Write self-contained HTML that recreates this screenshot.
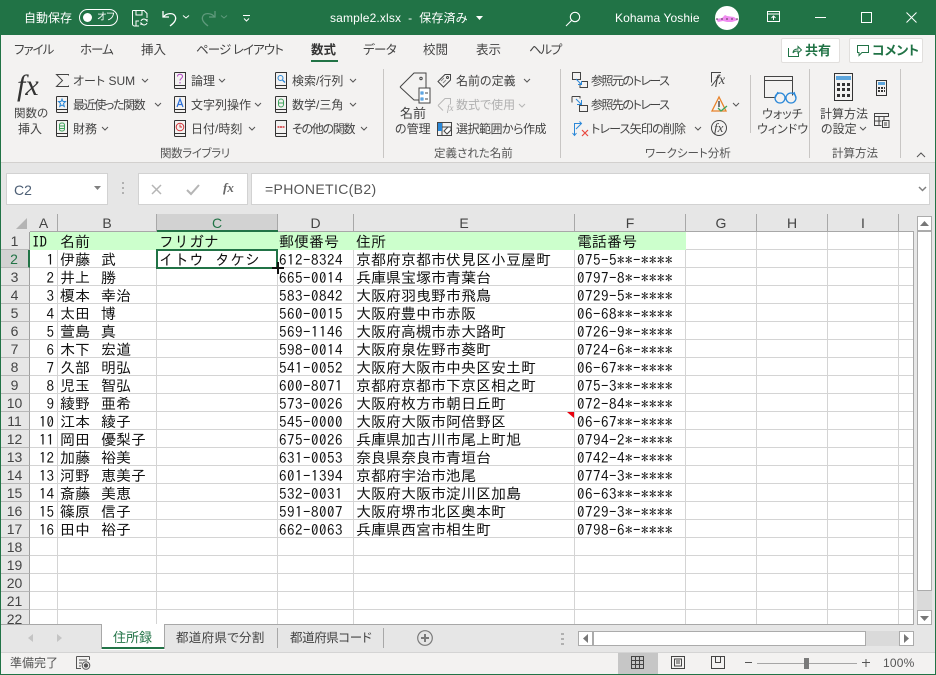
<!DOCTYPE html>
<html lang="ja"><head><meta charset="utf-8"><title>sample2.xlsx</title>
<style>
html,body{margin:0;padding:0}
body{width:936px;height:675px;overflow:hidden;position:relative;background:#e6e6e6;font-family:"Liberation Sans","Noto Sans CJK JP",sans-serif;color:#444}
.a{position:absolute;white-space:nowrap}
.t{position:absolute;white-space:nowrap;font-size:12px;line-height:16px;color:#444;font-feature-settings:"palt"}
.w{color:#fff}
svg{position:absolute;overflow:visible}
.tab{top:42px;font-size:12.5px;line-height:16px;color:#444}
.g{top:146px;font-size:11.5px;color:#555}
.sep{position:absolute;width:1px;background:#c8c6c4}
#grid{position:absolute;left:0;top:214px;width:914px;height:411px;overflow:hidden;background:#fff}
table{border-collapse:separate;border-spacing:0;table-layout:fixed;width:914px;position:absolute;left:0;top:18px}
td{height:18px;box-sizing:border-box;padding:2px 0 0 2px;border-right:1px solid #d4d4d4;border-bottom:1px solid #d4d4d4;font:15px/15px "IPAGothic","Noto Sans CJK JP",monospace;color:#111;overflow:hidden;white-space:nowrap}
td:nth-child(5),td:nth-child(7){letter-spacing:.5px}
td:nth-child(5){padding-left:1px}
tr.f td{letter-spacing:0}
td.h{background:#e6e6e6;border-right:1px solid #9f9f9f;border-bottom:1px solid #b8b8b8;text-align:center;font:14px/15px "Liberation Sans",sans-serif;color:#444;padding:2px 0 0 0}
td.n{text-align:right;padding:2px 3px 0 0}
tr.f td{background:#ccffcc;border-color:#ccffcc}
tr.f td.h{background:#e6e6e6;border-right-color:#9f9f9f;border-bottom-color:#b8b8b8}
tr.f td.e{background:#fff;border-color:#d4d4d4}
s{text-decoration:none;font-size:11px;line-height:0}
.ch{position:absolute;top:214px;height:18px;font-size:14px;line-height:18px;text-align:center;color:#444;border-right:1px solid #a8a8a8;box-sizing:border-box;background:#e6e6e6}
</style></head><body>

<!-- title bar -->
<div class="a" style="left:0;top:0;width:936px;height:35px;background:#217346"></div>
<div class="t w" style="left:24px;top:10px;font-size:12px">自動保存</div>
<div class="a" style="left:79px;top:9px;width:37px;height:15px;border:1px solid #fff;border-radius:9px"></div>
<div class="a" style="left:83px;top:13px;width:9px;height:9px;background:#fff;border-radius:50%"></div>
<div class="t w" style="left:97px;top:10px;font-size:10px">オフ</div>
<svg style="left:132px;top:10px" width="16" height="17" fill="none" stroke="#fff"><path d="M.5.5H12l3 3V8M.5.5V14a2 2 0 002 2H7M4 .5V5h6V.5M4 16v-5h3"/><path d="M9 11a3 3 0 015-1l1 1v-2M15 13a3 3 0 01-5 1l-1-1v2" stroke-width="1"/></svg>
<svg style="left:162px;top:10px" width="15" height="17" fill="none" stroke="#fff" stroke-width="1.3"><path d="M1 1v6h6M1.5 7C4 3 12 2 13.5 7c1 4-3 7-5.5 9"/></svg>
<svg style="left:183px;top:15px" width="6" height="4" fill="none" stroke="#fff"><path d="M0 .5l3 2.500 3-2.500"/></svg>
<svg style="left:201px;top:10px" width="15" height="17" fill="none" stroke="#5f9a7c" stroke-width="1.300"><path d="M14 1v6H8M13.500 7C11 3 3 2 1.500 7c-1 4 3 7 5.500 9"/></svg>
<svg style="left:221px;top:15px" width="6" height="4" fill="none" stroke="#5f9a7c"><path d="M0 .5l3 2.500 3-2.500"/></svg>
<svg style="left:243px;top:15px" width="8" height="7" fill="none" stroke="#fff"><path d="M0 .5h7M1 3.500l2.500 2.500L6 3.500"/></svg>
<div class="t w" style="left:330px;top:10px;font-size:12px;letter-spacing:.15px">sample2.xlsx&nbsp; - &nbsp;保存済み</div>
<svg style="left:476px;top:16px" width="7" height="4" fill="#fff"><path d="M0 0h7L3.500 4z"/></svg>
<svg style="left:565px;top:11px" width="16" height="16" fill="none" stroke="#fff" stroke-width="1.100"><circle cx="10" cy="6" r="4.700"/><path d="M6.500 9.500L1 15"/></svg>
<div class="t w" style="left:615px;top:10px;font-size:12px;letter-spacing:.1px">Kohama Yoshie</div>
<div class="a" style="left:715px;top:6px;width:24px;height:24px;border-radius:50%;background:#fff"></div>
<svg style="left:715px;top:12px" width="24" height="12"><path d="M1 7l6-1 3-3 2 1 7 1 4 3-6 2-5 0-4-1-5 1z" fill="#f08cf0"/><path d="M1 7h22" stroke="#222" stroke-width=".7" stroke-dasharray="2 3"/></svg>
<svg style="left:767px;top:11px" width="14" height="12" fill="none" stroke="#fff"><path d="M.5.500h12v10H.5zM.5 3h12M6.500 9V5M4.500 7l2-2 2 2"/></svg>
<div class="a" style="left:815px;top:17px;width:11px;height:1px;background:#fff"></div>
<div class="a" style="left:861px;top:12px;width:9px;height:9px;border:1px solid #fff"></div>
<svg style="left:906px;top:12px" width="11" height="11" stroke="#fff" fill="none"><path d="M.5.500l10 10M10.500.500l-10 10"/></svg>

<!-- ribbon -->
<div class="a" style="left:1px;top:35px;width:934px;height:127px;background:#f3f2f1"></div>
<div class="a" style="left:0;top:162px;width:936px;height:1px;background:#d2d0ce"></div>
<div class="t tab" style="left:14px;letter-spacing:-1px">ファイル</div>
<div class="t tab" style="left:80px;letter-spacing:-1px">ホーム</div>
<div class="t tab" style="left:141px">挿入</div>
<div class="t tab" style="left:196px;letter-spacing:-.9px">ページ レイアウト</div>
<div class="t tab" style="left:311px;font-weight:700;color:#333">数式</div>
<div class="a" style="left:311px;top:60px;width:27px;height:2px;background:#217346"></div>
<div class="t tab" style="left:363px;letter-spacing:-.6px">データ</div>
<div class="t tab" style="left:423px">校閲</div>
<div class="t tab" style="left:476px">表示</div>
<div class="t tab" style="left:529px;letter-spacing:-1.300px">ヘルプ</div>
<div class="a" style="left:781px;top:38px;width:57px;height:23px;background:#fff;border:1px solid #e1dfdd;border-radius:2px"></div>
<svg style="left:788px;top:45px" width="14" height="12" fill="none" stroke="#217346"><path d="M.5 3v8.500h10V8M5 8c0-3 2-4 5-4V1.500L13.500 5 10 8V6c-2 0-4 0-5 2z"/></svg>
<div class="t" style="left:805px;top:43px;font-size:13px;font-weight:700;color:#217346">共有</div>
<div class="a" style="left:849px;top:38px;width:72px;height:23px;background:#fff;border:1px solid #e1dfdd;border-radius:2px"></div>
<svg style="left:857px;top:45px" width="13" height="12" fill="none" stroke="#217346"><path d="M.5.500h11v7H5l-3 3v-3H.5z"/></svg>
<div class="t" style="left:872px;top:43px;font-size:13px;font-weight:700;color:#217346">コメント</div>

<!-- insert function -->
<div class="a" style="left:17px;top:68px;font:italic 30px/36px 'Liberation Serif',serif;color:#333">fx</div>
<div class="t" style="left:14px;top:106px;font-size:11.500px">関数の</div>
<div class="t" style="left:18px;top:121px">挿入</div>

<svg style="left:56px;top:74px" width="13" height="13" fill="none" stroke="#444"><path d="M12.500 1.500V.5H.5l6 6-6 6h12v-1"/></svg>
<div class="t" style="left:73px;top:73px">オート SUM</div>
<div class="t" style="left:73px;top:97px;letter-spacing:-1.400px">最近使った関数</div>
<div class="t" style="left:73px;top:121px">財務</div>
<div class="t" style="left:191px;top:73px">論理</div>
<div class="t" style="left:191px;top:97px">文字列操作</div>
<div class="t" style="left:191px;top:121px">日付/時刻</div>
<div class="t" style="left:292px;top:73px">検索/行列</div>
<div class="t" style="left:292px;top:97px">数学/三角</div>
<div class="t" style="left:292px;top:121px;letter-spacing:-1.300px">その他の関数</div>

<!-- book icons -->
<svg style="left:56px;top:96px" width="12" height="17" fill="none" stroke="#333"><path d="M.5 1C.5.700 1 .500 1.500.500h10v16h-10a1 1 0 01-1-1zM.5 13.500h11"/><path d="M6 3l1 2.500h2.500L7.500 7.500l.8 3L6 9l-2.300 1.500.8-3-2-2H5z" stroke="#2b88d8"/></svg>
<svg style="left:56px;top:120px" width="12" height="17" fill="none" stroke="#333"><path d="M.5 1C.5.700 1 .500 1.500.500h10v16h-10a1 1 0 01-1-1zM.5 13.500h11"/><rect x="3.500" y="3" width="5" height="8" rx="2" stroke="#3fa35c"/><path d="M3.500 6h5M3.500 8.500h5" stroke="#3fa35c"/></svg>
<svg style="left:174px;top:72px" width="12" height="17" fill="none" stroke="#333"><path d="M.5 1C.5.700 1 .500 1.500.500h10v16h-10a1 1 0 01-1-1zM.5 13.500h11"/><path d="M3.500 4.500c0-3 5-3 5 0 0 2-2.500 2-2.500 4M6 10v1.500" stroke="#b146c2"/></svg>
<svg style="left:174px;top:96px" width="12" height="17" fill="none" stroke="#333"><path d="M.5 1C.5.700 1 .500 1.500.500h10v16h-10a1 1 0 01-1-1zM.5 13.500h11"/><path d="M3 11l3-8 3 8M4 8.500h4" stroke="#2b6fd8" stroke-width="1.200"/></svg>
<svg style="left:174px;top:120px" width="12" height="17" fill="none" stroke="#333"><path d="M.5 1C.5.700 1 .500 1.500.500h10v16h-10a1 1 0 01-1-1zM.5 13.500h11"/><circle cx="6" cy="7" r="3.800" stroke="#d13438"/><path d="M6 4.500V7h2" stroke="#d13438"/></svg>
<svg style="left:275px;top:72px" width="12" height="17" fill="none" stroke="#333"><path d="M.5 1C.5.700 1 .500 1.500.500h10v16h-10a1 1 0 01-1-1zM.5 13.500h11"/><circle cx="5.500" cy="6" r="2.500" stroke="#2b88d8"/><path d="M7.500 8L10 10.500" stroke="#2b88d8" stroke-width="1.300"/></svg>
<svg style="left:275px;top:96px" width="12" height="17" fill="none" stroke="#333"><path d="M.5 1C.5.700 1 .500 1.500.500h10v16h-10a1 1 0 01-1-1zM.5 13.500h11"/><rect x="3.500" y="3" width="5" height="8" rx="2.500" stroke="#3fa35c"/><path d="M3.500 7h5" stroke="#3fa35c"/></svg>
<svg style="left:275px;top:120px" width="12" height="17" fill="none" stroke="#333"><path d="M.5 1C.5.700 1 .500 1.500.500h10v16h-10a1 1 0 01-1-1zM.5 13.500h11"/><path d="M2.500 7h2M5 7h2M7.500 7h2" stroke="#d13438" stroke-width="1.500"/></svg>

<!-- chevrons -->
<svg style="left:0;top:0" width="936" height="170" fill="none" stroke="#555" stroke-width="1">
<path d="M142 79l3 3 3-3M155 103l3 3 3-3M102 127l3 3 3-3M219 79l3 3 3-3M255 103l3 3 3-3M249 127l3 3 3-3M350 79l3 3 3-3M350 103l3 3 3-3M361 127l3 3 3-3M524 79l3 3 3-3M695 127l3 3 3-3M733 103l3 3 3-3M860 127l3 3 3-3M917 157l4-4 4 4"/>
<path d="M519 104l3 3 3-3" stroke="#b5b5b5"/>
</svg>

<div class="t g" style="left:160px;letter-spacing:-.4px">関数ライブラリ</div>
<div class="sep" style="left:383px;top:69px;height:89px"></div>

<!-- defined names -->
<svg style="left:399px;top:72px" width="32" height="32" fill="none" stroke="#444"><path d="M1 15L15 1h12v19M1 15l14 13h5"/><circle cx="22" cy="6.500" r="1.200"/><rect x="20" y="16" width="11" height="15" fill="#fff"/><path d="M22 20h2v2h-2zM22 26h2v2h-2z" stroke="#2b88d8"/><path d="M26 21h3M26 27h3" stroke="#444"/></svg>
<div class="t" style="left:400px;top:106px;font-size:13px">名前</div>
<div class="t" style="left:395px;top:121px">の管理</div>
<svg style="left:437px;top:73px" width="15" height="15" fill="none" stroke="#444"><path d="M1 8.500L8 1.500h5.500V7l-7 7z"/><circle cx="10.500" cy="4.500" r="1"/><path d="M4 8l3-3M6 10l3-3" stroke="#888"/></svg>
<svg style="left:437px;top:97px" width="15" height="15" fill="none" stroke="#b8b8b8"><path d="M1 8.500L8 1.500h5.500V7M1 8.500l5 5"/></svg>
<div class="a" style="left:447px;top:104px;font:italic 9px/9px 'Liberation Serif',serif;color:#aaa">fx</div>
<svg style="left:437px;top:122px" width="15" height="14" fill="none" stroke="#444"><path d="M.5.500h14v13H.5zM.5 5h14M5 .500v13"/><path d="M1 1h4v4H1zM1 5h4v4H1z" fill="#2b88d8" stroke="none"/><path d="M7 9l4-4h3v3l-4 4z" fill="#fff"/></svg>
<div class="t" style="left:456px;top:73px">名前の定義</div>
<div class="t" style="left:456px;top:97px;color:#b1b1b1">数式で使用</div>
<div class="t" style="left:456px;top:121px;letter-spacing:-.5px">選択範囲から作成</div>
<div class="t g" style="left:434px">定義された名前</div>
<div class="sep" style="left:560px;top:69px;height:89px"></div>

<!-- audit -->
<svg style="left:572px;top:72px" width="16" height="16" fill="none" stroke="#444"><path d="M.5.500h8v7h-8zM10 9.500h5.500v6H8v-4"/><path d="M4 7l5 5" stroke="#2b88d8"/><path d="M9.500 9v3.500H6" stroke="#2b88d8"/></svg>
<svg style="left:572px;top:96px" width="16" height="16" fill="none" stroke="#444"><path d="M0 .5h8v2M0 .500v6M7.500 9.500h8v6h-8z"/><path d="M4 3l5 5" stroke="#2b88d8"/><path d="M9.500 4v4.500H5" stroke="#2b88d8"/></svg>
<svg style="left:572px;top:120px" width="18" height="17" fill="none" stroke="#2b88d8"><path d="M2.500 15V3.500h7M.5 13l2 2.500 2-2.500M7.500 1.500l2 2-2 2M4 9l5-5"/><path d="M10 10l6 6M16 10l-6 6" stroke="#e8473f" stroke-width="1.200"/></svg>
<div class="t" style="left:591px;top:73px;letter-spacing:-1.500px">参照元のトレース</div>
<div class="t" style="left:591px;top:97px;letter-spacing:-1.500px">参照先のトレース</div>
<div class="t" style="left:591px;top:121px;letter-spacing:-.8px">トレース矢印の削除</div>
<svg style="left:711px;top:72px" width="10" height="14" fill="none" stroke="#444"><path d="M0 .5h10M.5 .5v10M.5 14L9 3"/></svg>
<div class="a" style="left:715px;top:72px;font:italic 14px/18px 'Liberation Serif',serif;color:#444">fx</div>
<svg style="left:711px;top:96px" width="17" height="16" fill="none"><path d="M8 1L1 15h14z" stroke="#e8832a" stroke-width="1.300"/><path d="M8 5v6" stroke="#333" stroke-width="1.300"/><path d="M7 12l3 3 6-5" stroke="#3fa35c" stroke-width="1.300"/></svg>
<svg style="left:711px;top:120px" width="16" height="16" fill="none" stroke="#444"><circle cx="8" cy="8" r="7.500"/></svg>
<div class="a" style="left:714px;top:119px;font:italic 13px/18px 'Liberation Serif',serif;color:#444">fx</div>
<div class="sep" style="left:750px;top:75px;height:58px"></div>
<svg style="left:764px;top:76px" width="33" height="29" fill="none" stroke="#444"><path d="M.5 22V.5h28v19M.5 4.500h28M.5 21.500h10" /><g stroke="#2b88d8" stroke-width="1.300"><circle cx="16" cy="22" r="5"/><circle cx="27" cy="22" r="5"/><path d="M21 21h1M11 22l3-6M32 22l-2-6"/></g></svg>
<div class="t" style="left:762px;top:106px">ウォッチ</div>
<div class="t" style="left:757px;top:121px">ウィンドウ</div>
<div class="sep" style="left:809px;top:69px;height:89px"></div>

<!-- calc -->
<svg style="left:834px;top:73px" width="23" height="29" fill="none"><rect x=".5" y=".5" width="18" height="27" stroke="#333"/><rect x="2" y="3" width="15" height="4" fill="#5ca5dc"/><path d="M3 10h3v3H3zM8 10h3v3H8zM13 10h3v3h-3zM3 15h3v3H3zM8 15h3v3H8zM13 15h3v3h-3zM3 21h3v3H3zM8 21h3v3H8zM13 21h3v3h-3z" fill="#333"/></svg>
<svg style="left:876px;top:80px" width="12" height="16" fill="none"><rect x=".5" y=".5" width="10" height="15" stroke="#333"/><rect x="2" y="2" width="7" height="3" fill="#5ca5dc"/><path d="M2 7h2v2H2zM5 7h2v2H5zM8 7h1v2H8zM2 10h2v2H2zM5 10h2v2H5zM8 10h1v2H8z" fill="#333"/></svg>
<svg style="left:874px;top:113px" width="16" height="15" fill="none" stroke="#444"><path d="M.5.500h14v3H.5zM.5 3.500v9h7M.5 8h7M5 3.500v9M10 3.500V7"/><rect x="8.500" y="7.500" width="6.500" height="7" fill="#f3f2f1"/><path d="M10 10h3M10 12h3"/></svg>
<div class="t" style="left:820px;top:106px">計算方法</div>
<div class="t" style="left:821px;top:121px">の設定</div>
<div class="sep" style="left:900px;top:69px;height:89px"></div>
<div class="t g" style="left:645px">ワークシート分析</div>
<div class="t g" style="left:832px">計算方法</div>

<!-- formula bar -->
<div class="a" style="left:0;top:163px;width:936px;height:51px;background:#e6e6e6"></div>
<div class="a" style="left:6px;top:173px;width:100px;height:30px;background:#fff;border:1px solid #d2d2d2"></div>
<div class="a" style="left:14px;top:181px;font-size:14px;line-height:18px;color:#4d5f75">C2</div>
<svg style="left:94px;top:186px" width="8" height="4"><path d="M0 0h7L3.500 4z" fill="#808080"/></svg>
<svg style="left:122px;top:182px" width="3" height="13"><path d="M0 0h2v2H0zM0 5h2v2H0zM0 10h2v2H0z" fill="#b0b0b0"/></svg>
<div class="a" style="left:138px;top:173px;width:108px;height:30px;background:#fff;border:1px solid #d2d2d2"></div>
<svg style="left:151px;top:184px" width="11" height="11" stroke="#b5b5b5" stroke-width="1.500"><path d="M1 1l9 9M10 1l-9 9"/></svg>
<svg style="left:186px;top:183px" width="15" height="12" stroke="#b5b5b5" stroke-width="2" fill="none"><path d="M1 7l4 4 8-9"/></svg>
<div class="a" style="left:223px;top:179px;font:italic bold 13px/18px 'Liberation Serif',serif;color:#666">fx</div>
<div class="a" style="left:251px;top:173px;width:677px;height:30px;background:#fff;border:1px solid #d2d2d2"></div>
<div class="a" style="left:265px;top:180px;font-size:14px;line-height:18px;color:#555;letter-spacing:.35px">=PHONETIC(B2)</div>
<svg style="left:918px;top:186px" width="9" height="6" fill="none" stroke="#808080" stroke-width="1.500"><path d="M1 1l3.500 3.500L8 1"/></svg>

<!-- grid -->
<div id="grid">
<table><colgroup><col style="width:30px"><col style="width:28px"><col style="width:99px"><col style="width:121px"><col style="width:76px"><col style="width:221px"><col style="width:111px"><col style="width:71px"><col style="width:71px"><col style="width:71px"><col style="width:15px"></colgroup>
<tr class="f"><td class="h">1</td><td>ID</td><td>名前</td><td>フリガナ</td><td>郵便番号</td><td>住所</td><td>電話番号</td><td class="e"></td><td class="e"></td><td class="e"></td><td class="e"></td></tr>
<tr><td class="h" style="background:#d2d2d2;color:#217346;border-right:2px solid #217346">2</td><td class="n">1</td><td>伊藤<s>　</s>武</td><td>イトウ<s>　</s>タケシ</td><td>612-8324</td><td>京都府京都市伏見区小豆屋町</td><td>075-5**-****</td><td></td><td></td><td></td><td></td></tr>
<tr><td class="h">3</td><td class="n">2</td><td>井上<s>　</s>勝</td><td></td><td>665-0014</td><td>兵庫県宝塚市青葉台</td><td>0797-8*-****</td><td></td><td></td><td></td><td></td></tr>
<tr><td class="h">4</td><td class="n">3</td><td>榎本<s>　</s>幸治</td><td></td><td>583-0842</td><td>大阪府羽曳野市飛鳥</td><td>0729-5*-****</td><td></td><td></td><td></td><td></td></tr>
<tr><td class="h">5</td><td class="n">4</td><td>太田<s>　</s>博</td><td></td><td>560-0015</td><td>大阪府豊中市赤阪</td><td>06-68**-****</td><td></td><td></td><td></td><td></td></tr>
<tr><td class="h">6</td><td class="n">5</td><td>萱島<s>　</s>真</td><td></td><td>569-1146</td><td>大阪府高槻市赤大路町</td><td>0726-9*-****</td><td></td><td></td><td></td><td></td></tr>
<tr><td class="h">7</td><td class="n">6</td><td>木下<s>　</s>宏道</td><td></td><td>598-0014</td><td>大阪府泉佐野市葵町</td><td>0724-6*-****</td><td></td><td></td><td></td><td></td></tr>
<tr><td class="h">8</td><td class="n">7</td><td>久部<s>　</s>明弘</td><td></td><td>541-0052</td><td>大阪府大阪市中央区安土町</td><td>06-67**-****</td><td></td><td></td><td></td><td></td></tr>
<tr><td class="h">9</td><td class="n">8</td><td>児玉<s>　</s>智弘</td><td></td><td>600-8071</td><td>京都府京都市下京区相之町</td><td>075-3**-****</td><td></td><td></td><td></td><td></td></tr>
<tr><td class="h">10</td><td class="n">9</td><td>綾野<s>　</s>亜希</td><td></td><td>573-0026</td><td>大阪府枚方市朝日丘町</td><td>072-84*-****</td><td></td><td></td><td></td><td></td></tr>
<tr><td class="h">11</td><td class="n">10</td><td>江本<s>　</s>綾子</td><td></td><td>545-0000</td><td>大阪府大阪市阿倍野区</td><td>06-67**-****</td><td></td><td></td><td></td><td></td></tr>
<tr><td class="h">12</td><td class="n">11</td><td>岡田<s>　</s>優梨子</td><td></td><td>675-0026</td><td>兵庫県加古川市尾上町旭</td><td>0794-2*-****</td><td></td><td></td><td></td><td></td></tr>
<tr><td class="h">13</td><td class="n">12</td><td>加藤<s>　</s>裕美</td><td></td><td>631-0053</td><td>奈良県奈良市青垣台</td><td>0742-4*-****</td><td></td><td></td><td></td><td></td></tr>
<tr><td class="h">14</td><td class="n">13</td><td>河野<s>　</s>恵美子</td><td></td><td>601-1394</td><td>京都府宇治市池尾</td><td>0774-3*-****</td><td></td><td></td><td></td><td></td></tr>
<tr><td class="h">15</td><td class="n">14</td><td>斎藤<s>　</s>美恵</td><td></td><td>532-0031</td><td>大阪府大阪市淀川区加島</td><td>06-63**-****</td><td></td><td></td><td></td><td></td></tr>
<tr><td class="h">16</td><td class="n">15</td><td>篠原<s>　</s>信子</td><td></td><td>591-8007</td><td>大阪府堺市北区奥本町</td><td>0729-3*-****</td><td></td><td></td><td></td><td></td></tr>
<tr><td class="h">17</td><td class="n">16</td><td>田中<s>　</s>裕子</td><td></td><td>662-0063</td><td>兵庫県西宮市相生町</td><td>0798-6*-****</td><td></td><td></td><td></td><td></td></tr>
<tr><td class="h">18</td><td></td><td></td><td></td><td></td><td></td><td></td><td></td><td></td><td></td><td></td></tr>
<tr><td class="h">19</td><td></td><td></td><td></td><td></td><td></td><td></td><td></td><td></td><td></td><td></td></tr>
<tr><td class="h">20</td><td></td><td></td><td></td><td></td><td></td><td></td><td></td><td></td><td></td><td></td></tr>
<tr><td class="h">21</td><td></td><td></td><td></td><td></td><td></td><td></td><td></td><td></td><td></td><td></td></tr>
<tr><td class="h">22</td><td></td><td></td><td></td><td></td><td></td><td></td><td></td><td></td><td></td><td></td></tr>
</table>
</div>
<!-- column headers -->
<div class="a" style="left:0;top:214px;width:914px;height:18px;background:#e6e6e6"></div>
<svg style="left:16px;top:218px" width="12" height="12"><path d="M11 0v11H0z" fill="#b4b4b4"/></svg>
<div class="ch" style="left:30px;width:28px">A</div>
<div class="ch" style="left:58px;width:99px">B</div>
<div class="ch" style="left:157px;width:121px;background:#d2d2d2;color:#217346;border-bottom:2px solid #217346">C</div>
<div class="ch" style="left:278px;width:76px">D</div>
<div class="ch" style="left:354px;width:221px">E</div>
<div class="ch" style="left:575px;width:111px">F</div>
<div class="ch" style="left:686px;width:71px">G</div>
<div class="ch" style="left:757px;width:71px">H</div>
<div class="ch" style="left:828px;width:71px">I</div>
<div class="a" style="left:30px;top:231px;width:883px;height:1px;background:#a8a8a8"></div>
<div class="a" style="left:157px;top:230px;width:121px;height:2px;background:#217346"></div>
<div class="a" style="left:913px;top:231px;width:1px;height:394px;background:#a8a8a8"></div>
<div class="a" style="left:0;top:624px;width:914px;height:1px;background:#a8a8a8"></div>
<!-- selection + cursor -->
<div class="a" style="left:156px;top:249px;width:118px;height:16px;border:2px solid #217346"></div>
<svg style="left:272px;top:262px" width="12" height="12"><path d="M5 0h2v5h5v2H7v5H5V7H0V5h5z" fill="#111"/></svg>
<!-- comment marker -->
<svg style="left:567px;top:412px" width="7" height="6"><path d="M0 0h7v6z" fill="#e8000d"/></svg>

<!-- v scrollbar -->
<div class="a" style="left:917px;top:216px;width:15px;height:408px;background:#dadada"></div>
<div class="a" style="left:917px;top:216px;width:13px;height:13px;background:#fff;border:1px solid #ababab"></div>
<svg style="left:920px;top:221px" width="9" height="5"><path d="M0 5h9L4.500 0z" fill="#777"/></svg>
<div class="a" style="left:917px;top:231px;width:13px;height:358px;background:#fff;border:1px solid #ababab"></div>
<div class="a" style="left:917px;top:610px;width:13px;height:13px;background:#fff;border:1px solid #ababab"></div>
<svg style="left:920px;top:616px" width="9" height="5"><path d="M0 0h9L4.500 5z" fill="#777"/></svg>

<!-- tabs -->
<div class="a" style="left:101px;top:624px;width:64px;height:26px;background:#fff"></div>
<div class="a" style="left:101px;top:647px;width:64px;height:2px;background:#217346"></div>
<div class="a" style="left:101px;top:624px;width:1px;height:25px;background:#a8a8a8"></div>
<div class="a" style="left:164px;top:624px;width:1px;height:25px;background:#a8a8a8"></div>
<svg style="left:28px;top:634px" width="34" height="9" fill="#c4c4c4"><path d="M5 0v8L0 4zM29 0v8l5-4z"/></svg>
<div class="t" style="left:113px;top:630px;font-size:13px;color:#217346">住所録</div>
<div class="t" style="left:176px;top:630px;font-size:12.500px;letter-spacing:.3px">都道府県で分割</div>
<div class="sep" style="left:277px;top:628px;height:20px;background:#a8a8a8"></div>
<div class="t" style="left:290px;top:630px;font-size:12.500px;letter-spacing:-.4px">都道府県コード</div>
<div class="sep" style="left:383px;top:628px;height:20px;background:#a8a8a8"></div>
<svg style="left:417px;top:630px" width="16" height="16" fill="none" stroke="#7a7a7a"><circle cx="8" cy="8" r="7.300" stroke-width="1.200"/><path d="M8 4v8M4 8h8" stroke-width="2"/></svg>
<svg style="left:561px;top:633px" width="3" height="13"><path d="M0 0h3v2H0zM0 5h3v2H0zM0 10h3v2H0z" fill="#b0b0b0"/></svg>
<!-- h scrollbar -->
<div class="a" style="left:578px;top:631px;width:336px;height:15px;background:#dadada"></div>
<div class="a" style="left:578px;top:631px;width:13px;height:13px;background:#fff;border:1px solid #ababab"></div>
<svg style="left:583px;top:634px" width="5" height="9"><path d="M5 0v9L0 4.500z" fill="#777"/></svg>
<div class="a" style="left:593px;top:631px;width:271px;height:13px;background:#fff;border:1px solid #ababab"></div>
<div class="a" style="left:899px;top:631px;width:13px;height:13px;background:#fff;border:1px solid #ababab"></div>
<svg style="left:904px;top:634px" width="5" height="9"><path d="M0 0v9l5-4.500z" fill="#777"/></svg>

<!-- status -->
<div class="a" style="left:0;top:652px;width:936px;height:22px;background:#f3f2f1;border-top:1px solid #d4d4d4;box-sizing:border-box"></div>
<div class="t" style="left:10px;top:655px;color:#555">準備完了</div>
<svg style="left:76px;top:656px" width="15" height="14" fill="none" stroke="#555"><path d="M.5.500h13M.5.500v12H5M3 4h8M3 7h3M3 10h2M13.500.500V4"/><circle cx="10" cy="9.500" r="3.800"/><circle cx="10" cy="9.500" r="1.700" fill="#555"/></svg>
<div class="a" style="left:618px;top:653px;width:40px;height:21px;background:#c6c6c6"></div>
<svg style="left:631px;top:656px" width="13" height="14" fill="none" stroke="#444"><path d="M.5.500h12v12H.5zM4.500.5v12M8.500.5v12M.5 4.500h12M.5 8.500h12"/></svg>
<svg style="left:671px;top:656px" width="14" height="14" fill="none" stroke="#444"><path d="M.5.500h13v12H.5zM3.500 3h7v7h-7zM5 5h4M5 7h4"/></svg>
<svg style="left:711px;top:656px" width="14" height="14" fill="none" stroke="#444"><path d="M.5.500h13v12H.5zM4.500.5v6h5v-6"/></svg>
<div class="a" style="left:745px;top:662px;width:7px;height:1px;background:#555"></div>
<div class="a" style="left:757px;top:663px;width:100px;height:1px;background:#a6a6a6"></div>
<div class="a" style="left:804px;top:658px;width:5px;height:11px;background:#7a7a7a"></div>
<svg style="left:862px;top:659px" width="8" height="8" stroke="#555"><path d="M0 3.500h8M4 0v8" fill="none"/></svg>
<div class="a" style="left:883px;top:655px;font-size:12px;line-height:16px;color:#555;letter-spacing:.2px">100%</div>

<!-- borders -->
<div class="a" style="left:0;top:35px;width:1px;height:640px;background:#217346"></div>
<div class="a" style="left:935px;top:35px;width:1px;height:640px;background:#217346"></div>
<div class="a" style="left:0;top:674px;width:936px;height:1px;background:#217346"></div>
</body></html>
